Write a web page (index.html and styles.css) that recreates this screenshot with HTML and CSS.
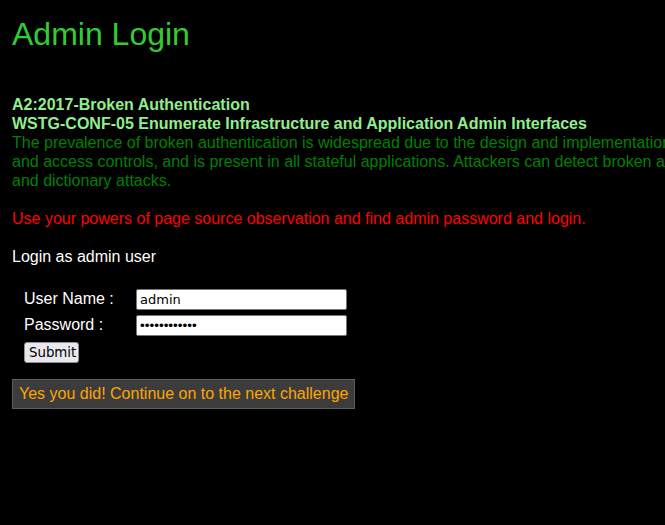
FILE: index.html
```html
<!DOCTYPE html>
<html>
<head>
<meta charset="utf-8">
<title>Admin Login</title>
<link rel="stylesheet" href="styles.css">
</head>
<body>
<div class="page">
  <h1 class="title">Admin Login</h1>
  <div class="intro">
    <div class="owasp">A2:2017-Broken Authentication</div>
    <div class="owasp">WSTG-CONF-05 Enumerate Infrastructure and Application Admin Interfaces</div>
    <div class="desc">The prevalence of broken authentication is widespread due to the design and implementation of most identity and access controls. Session management is the bedrock of authentication<br>and access controls, and is present in all stateful applications. Attackers can detect broken authentication using manual means and exploit them using automated tools with password lists<br>and dictionary attacks.</div>
  </div>
  <p class="hint">Use your powers of page source observation and find admin password and login.</p>
  <p class="lead">Login as admin user</p>
  <form class="login">
    <label class="label" for="user">User Name :</label>
    <input class="field" id="user" type="text" value="admin">
    <label class="label" for="pass">Password :</label>
    <input class="field field-secret" id="pass" type="password" value="adminpass123">
    <div class="actions"><button class="submit" type="button">Submit</button></div>
  </form>
  <div class="result">Yes you did! Continue on to the next challenge</div>
</div>
</body>
</html>
```
FILE: styles.css
```css
html, body {
  margin: 0;
  padding: 0;
  background: #000;
  overflow: hidden;
}
.page {
  padding: 16px 12px 0 12px;
  font-family: "Liberation Sans", Arial, sans-serif;
  font-size: 16px;
  line-height: 19px;
  color: #fff;
  white-space: nowrap;
}
.title {
  margin: 0;
  font-size: 32px;
  line-height: 37px;
  font-weight: normal;
  color: #32cd32;
}
.intro {
  margin-top: 42px;
}
.owasp {
  font-weight: bold;
  color: #90ee90;
}
.desc {
  color: #008000;
}
.hint {
  margin: 19px 0 0 0;
  color: #ff0000;
}
.lead {
  margin: 19px 0 0 0;
  color: #fff;
}
.login {
  margin: 23px 0 0 12px;
  display: grid;
  grid-template-columns: 112px 211px;
  row-gap: 5px;
  align-items: center;
  width: max-content;
}
.label {
  color: #fff;
  margin-top: -2px;
}
.field {
  box-sizing: border-box;
  width: 211px;
  height: 21px;
  margin: 0;
  padding: 1px 3px;
  border: 1px solid #767676;
  border-radius: 2px;
  background: #fff;
  color: #000;
  font-family: "DejaVu Sans", sans-serif;
  font-size: 13px;
}
.field-secret {
  font-family: "Liberation Sans", Arial, sans-serif;
  font-size: 13.5px;
}
.actions {
  grid-column: 1 / 3;
  padding-top: 1px;
}
.submit {
  box-sizing: border-box;
  width: 55px;
  height: 21px;
  margin: 0;
  padding: 0 4px;
  border: 1px solid #8f8f9d;
  border-radius: 3px;
  background: #e9e9ed;
  color: #000;
  font-family: "DejaVu Sans", sans-serif;
  font-size: 13.33px;
}
.result {
  display: inline-block;
  margin-top: 16px;
  padding: 5px 6px;
  line-height: 18px;
  background: #3c3c3c;
  border: 1px solid #5c5c5c;
  color: #ffa500;
}
```
